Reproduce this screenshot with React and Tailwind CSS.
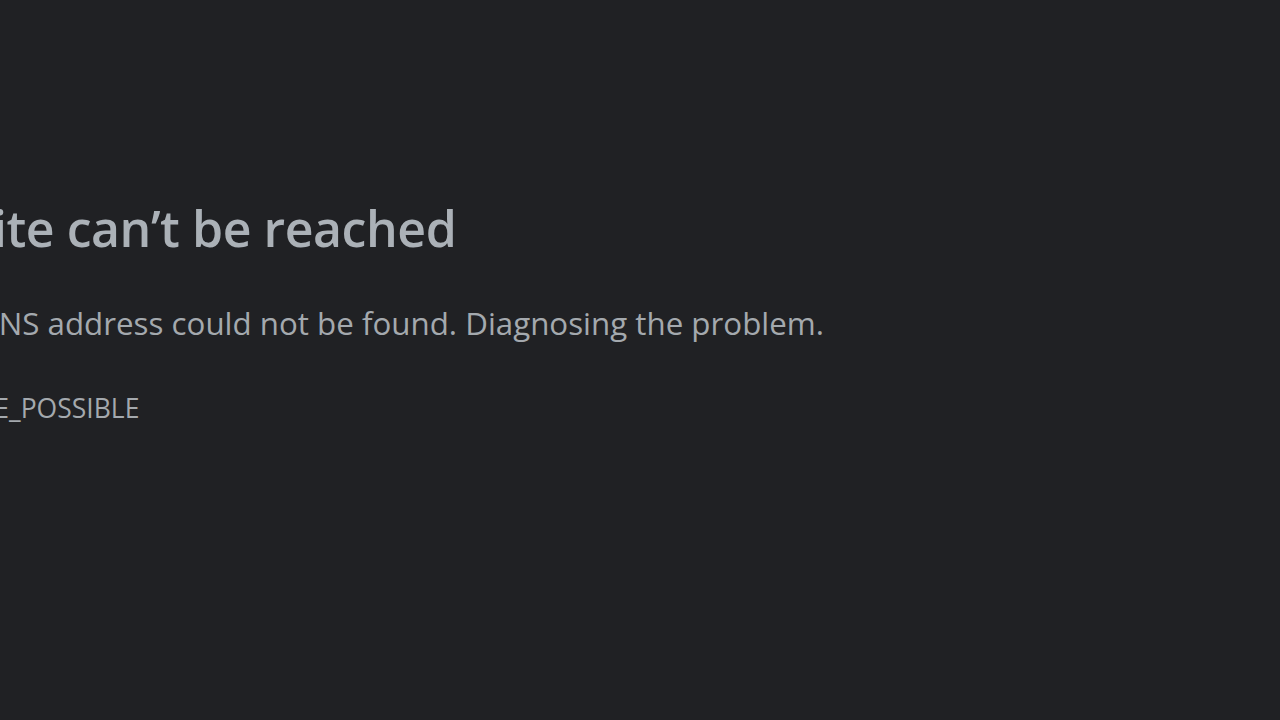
export default function App() {
  return (
    <div className="w-[1280px] h-[720px] bg-[#202124] overflow-hidden" style={{ fontFamily: '"Open Sans", "Noto Sans", sans-serif' }}>
      <div className="flex flex-col pt-[196px]">
        <h1 className="ml-[-140px] whitespace-nowrap text-[50px] leading-[64px] font-semibold text-[#abb1b7] tracking-[-0.45px]">
          This site can’t be reached
        </h1>
        <p className="ml-[-24px] mt-[43px] whitespace-nowrap text-[31.3px] leading-[40px] text-[#a4a9ae]">
          DNS address could not be found. Diagnosing the problem.
        </p>
        <p className="ml-[-141px] mt-[48px] whitespace-nowrap text-[26.5px] leading-[34px] text-[#a4a9ae]">
          DNS_PROBE_POSSIBLE
        </p>
      </div>
    </div>
  );
}
